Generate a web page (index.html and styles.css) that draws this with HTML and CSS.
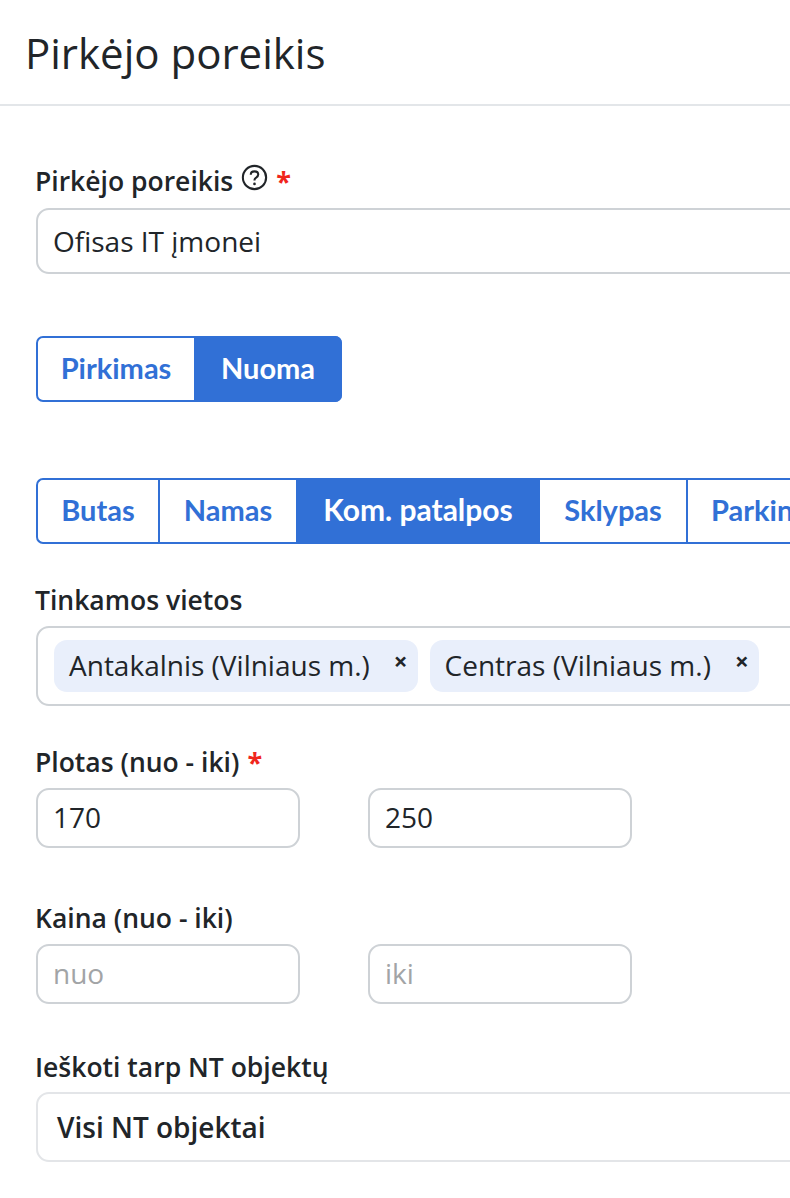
FILE: index.html
```html
<!DOCTYPE html>
<html lang="lt">
<head>
<meta charset="utf-8">
<title>Pirkėjo poreikis</title>
<link rel="stylesheet" href="styles.css">
</head>
<body>
<header class="page-header"><h1 class="page-title">Pirkėjo poreikis</h1></header>
<main class="form">
  <section class="field need-field">
    <div class="label">Pirkėjo poreikis
      <svg class="help" viewBox="0 0 26 26" width="27" height="27" aria-hidden="true">
        <circle cx="13" cy="13" r="11.2" fill="none" stroke="#212529" stroke-width="2"/>
        <path d="M9.4 10.4c0-2 1.6-3.3 3.6-3.3s3.6 1.2 3.6 3.1c0 1.5-.9 2.2-2 2.9-1 .6-1.6 1.1-1.6 2.2v.6" fill="none" stroke="#212529" stroke-width="2"/>
        <circle cx="13" cy="19.2" r="1.3" fill="#212529"/>
      </svg>
      <span class="req">*</span></div>
    <div class="input wide need-input">Ofisas IT įmonei</div>
  </section>

  <div class="segments deal">
    <span class="seg seg-pirkimas">Pirkimas</span>
    <span class="seg active seg-nuoma">Nuoma</span>
  </div>

  <div class="segments type">
    <span class="seg seg-butas">Butas</span>
    <span class="seg seg-namas">Namas</span>
    <span class="seg active seg-kom">Kom. patalpos</span>
    <span class="seg seg-sklypas">Sklypas</span>
    <span class="seg seg-parking">Parkingas</span>
  </div>

  <section class="field places">
    <div class="label">Tinkamos vietos</div>
    <div class="tagbox wide">
      <span class="tag">Antakalnis (Vilniaus m.)<span class="tag-x">×</span></span>
      <span class="tag">Centras (Vilniaus m.)<span class="tag-x">×</span></span>
    </div>
  </section>

  <section class="field area">
    <div class="label">Plotas (nuo - iki) <span class="req">*</span></div>
    <div class="range">
      <div class="input small">170</div>
      <div class="input small">250</div>
    </div>
  </section>

  <section class="field price">
    <div class="label">Kaina (nuo - iki)</div>
    <div class="range">
      <div class="input small placeholder">nuo</div>
      <div class="input small placeholder">iki</div>
    </div>
  </section>

  <section class="field search">
    <div class="label">Ieškoti tarp NT objektų</div>
    <div class="select wide">Visi NT objektai</div>
  </section>
</main>
</body>
</html>
```
FILE: styles.css
```css
html, body {
  margin: 0;
  padding: 0;
  width: 790px;
  height: 1198px;
  overflow: hidden;
  background: #fff;
  color: #212529;
  font-family: "Open Sans", "Noto Sans", sans-serif;
}
.page-header {
  height: 104px;
  border-bottom: 2px solid #e3e6e9;
  box-sizing: content-box;
  padding-left: 25px;
}
.page-title {
  margin: 0;
  padding-top: 26px;
  font-size: 42px;
  line-height: 54px;
  font-weight: 400;
  white-space: nowrap;
}
.form {
  width: 1000px;
  padding: 58px 0 0 36px;
  box-sizing: border-box;
}
.label {
  font-size: 26.5px;
  line-height: 34px;
  font-weight: 600;
  white-space: nowrap;
  display: flex;
  align-items: flex-start;
  gap: 8px;
  margin-left: -1px;
}
.req {
  color: #f0261c;
  font-size: 27px;
  line-height: 34px;
  font-weight: 700;
}
.help { margin-top: 0; }
.wide { width: 900px; box-sizing: border-box; }
.input {
  border: 2px solid #ced2d6;
  border-radius: 13px;
  box-sizing: border-box;
  padding: 0 15px;
  font-size: 28px;
  display: flex;
  align-items: center;
}
.need-field .label { margin-bottom: 10px; }
.need-input { height: 66px; }
.small { width: 264px; height: 60px; padding-bottom: 2px; }
.placeholder { color: #a2a4a6; }
.range { display: flex; gap: 68px; margin-top: 9px; }
.segments {
  display: inline-flex;
  border: 2px solid #3170d6;
  border-radius: 7px;
  height: 66px;
  box-sizing: border-box;
  font-family: Lato, "Open Sans", sans-serif;
  font-weight: 700;
  font-size: 29px;
  color: #3170d6;
  white-space: nowrap;
}
.deal { display: flex; width: 306px; margin-top: 62px; }
.type { display: flex; width: 1000px; margin-top: 76px; border-radius: 7px 0 0 7px; border-right: 0; }
.seg {
  display: flex;
  align-items: center;
  justify-content: center;
  box-sizing: border-box;
  padding-bottom: 4px;
}
.type .seg { border-right: 2px solid #3170d6; }
.active { background: #3170d6; color: #fff; }
.seg-pirkimas { width: 156px; }
.seg-nuoma { flex: 1; margin: -2px -2px -2px 0; border-radius: 0 7px 7px 0; }
.seg-butas { width: 122px; }
.seg-namas { width: 138px; }
.seg-kom { width: 242px; font-size: 30px; }
.seg-sklypas { width: 148px; }
.seg-parking { width: 170px; justify-content: flex-start; padding-left: 23px; }
.places { margin-top: 39px; }
.places .label { margin-bottom: 9px; }
.tagbox {
  display: flex;
  gap: 12px;
  height: 80px;
  padding: 12px 16px;
  border: 2px solid #ced2d6;
  border-radius: 13px;
}
.tag {
  display: flex;
  align-items: center;
  height: 52px;
  padding: 0 10px 2px 15px;
  border-radius: 13px;
  background: #e9effb;
  font-size: 28px;
  white-space: nowrap;
  box-sizing: border-box;
}
.tag-x {
  font-size: 24px;
  font-weight: 700;
  margin-left: 24px;
  margin-top: -8px;
  line-height: 1;
}
.area { margin-top: 39px; }
.price { margin-top: 53px; }
.search { margin-top: 46px; }
.search .label { margin-bottom: 8px; }
.select {
  height: 70px;
  padding: 0 19px;
  border: 2px solid #e3e5e8;
  border-radius: 13px;
  display: flex;
  align-items: center;
  font-size: 28px;
  font-weight: 600;
}
```
